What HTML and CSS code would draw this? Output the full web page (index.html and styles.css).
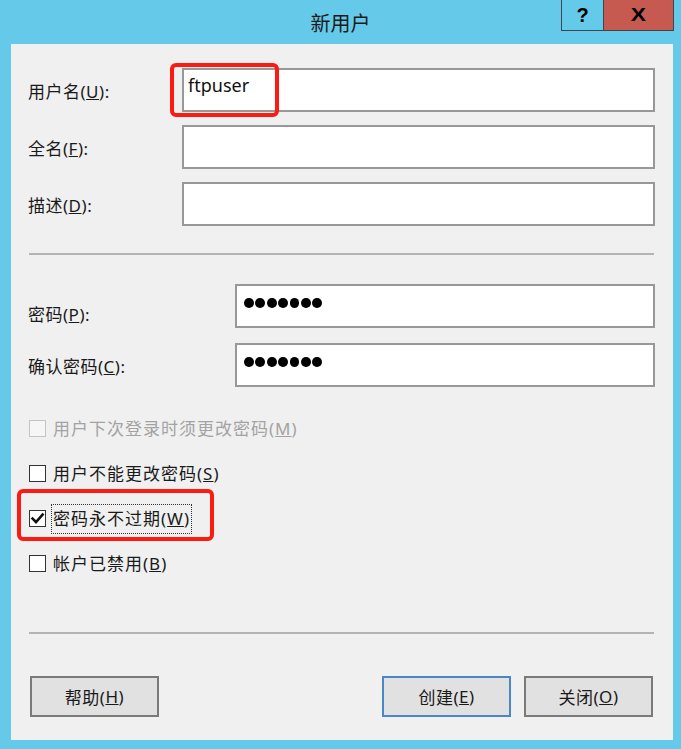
FILE: index.html
```html
<!DOCTYPE html>
<html lang="zh-CN">
<head>
<meta charset="utf-8">
<title>新用户</title>
<link rel="stylesheet" href="styles.css">
</head>
<body>
<div class="window">
  <div class="titlebar">
    <div class="spacer"></div>
    <div class="title">新用户</div>
    <div class="caption">
      <div class="cap-btn help-cap">?</div>
      <div class="cap-btn close-cap"><span class="x-glyph">X</span></div>
    </div>
  </div>
  <div class="client">
    <div class="row">
      <div class="label">用户名(<u>U</u>):</div>
      <div class="field"><span class="value">ftpuser</span></div>
    </div>
    <div class="row">
      <div class="label">全名(<u>F</u>):</div>
      <div class="field"></div>
    </div>
    <div class="row">
      <div class="label">描述(<u>D</u>):</div>
      <div class="field"></div>
    </div>
    <div class="sep sep-top"></div>
    <div class="row pw-row">
      <div class="label label-wide label-low">密码(<u>P</u>):</div>
      <div class="field">
        <div class="dots"><span class="dot"></span><span class="dot"></span><span class="dot"></span><span class="dot"></span><span class="dot"></span><span class="dot"></span><span class="dot"></span></div>
      </div>
    </div>
    <div class="row row-last">
      <div class="label label-wide">确认密码(<u>C</u>):</div>
      <div class="field">
        <div class="dots"><span class="dot"></span><span class="dot"></span><span class="dot"></span><span class="dot"></span><span class="dot"></span><span class="dot"></span><span class="dot"></span></div>
      </div>
    </div>
    <div class="checks">
      <div class="check disabled">
        <span class="box"></span>
        <span class="ctext">用户下次登录时须更改密码(<u>M</u>)</span>
      </div>
      <div class="check">
        <span class="box"></span>
        <span class="ctext">用户不能更改密码(<u>S</u>)</span>
      </div>
      <div class="check">
        <span class="box"><svg width="15" height="15" viewBox="0 0 15 15"><path d="M2.6 7.6 L6 11 L12.6 3.6" fill="none" stroke="#111" stroke-width="2.6" stroke-linecap="square"/></svg></span>
        <span class="ctext focus">密码永不过期(<u>W</u>)</span>
      </div>
      <div class="check">
        <span class="box"></span>
        <span class="ctext">帐户已禁用(<u>B</u>)</span>
      </div>
    </div>
    <div class="sep sep-bottom"></div>
    <div class="buttons">
      <div class="btn">帮助(<u>H</u>)</div>
      <div class="btn-group">
        <div class="btn default">创建(<u>E</u>)</div>
        <div class="btn">关闭(<u>O</u>)</div>
      </div>
    </div>
    <div class="mark mark-user"></div>
    <div class="mark mark-expire"></div>
  </div>
</div>
</body>
</html>
```
FILE: styles.css
```css
html, body {
  margin: 0;
  padding: 0;
}
body {
  background: #65c9e9;
  font-family: "Noto Sans", "Noto Sans CJK SC", sans-serif;
  color: #1a1a1a;
}
.window {
  width: 681px;
  height: 749px;
  background: #65c9e9;
  display: flex;
  flex-direction: column;
}
.titlebar {
  height: 44px;
  display: grid;
  grid-template-columns: 1fr auto 1fr;
  align-items: start;
}
.title {
  font-family: "Noto Sans CJK SC", sans-serif;
  font-size: 20px;
  line-height: 46px;
  color: #1a1a1a;
}
.caption {
  justify-self: end;
  margin-right: 7px;
  display: flex;
  border: 1px solid #3f4548;
  border-top: none;
}
.cap-btn {
  height: 30px;
  display: flex;
  align-items: center;
  justify-content: center;
  font-family: "Liberation Sans", sans-serif;
  font-weight: bold;
  color: #000;
}
.help-cap {
  width: 41px;
  font-size: 20px;
  border-right: 1px solid #3f4548;
  background: #65c9e9;
}
.close-cap {
  width: 69px;
  font-size: 19px;
  background: #c75a50;
}
.x-glyph {
  display: inline-block;
  transform: scaleX(1.2);
}
.client {
  position: relative;
  margin: 0 8px 0 11px;
  height: 696px;
  box-sizing: border-box;
  background: #f0f0f0;
  padding: 24px 18px 0 17px;
  display: flex;
  flex-direction: column;
  font-size: 17px;
}
.row {
  display: flex;
  align-items: center;
  height: 44px;
  margin-bottom: 13px;
}
.row-last {
  margin-bottom: 0;
}
.label {
  width: 154px;
  flex: none;
  white-space: nowrap;
  letter-spacing: 0.5px;
}
.label-wide {
  width: 207px;
}
.label-low {
  padding-top: 14px;
}
.pw-row {
  margin-top: 29px;
  margin-bottom: 15px;
}
.field {
  flex: 1;
  height: 44px;
  box-sizing: border-box;
  background: #fff;
  border: 2px solid #989898;
  padding: 3px 0 0 4px;
}
.value {
  font-family: "Noto Sans", sans-serif;
  font-size: 18px;
  line-height: 24px;
  color: #111;
}
.dots {
  display: flex;
  gap: 1.6px;
  padding: 9px 0 0 3px;
}
.dot {
  width: 9.8px;
  height: 10px;
  border-radius: 50%;
  background: #000;
}
.sep {
  height: 2px;
  background: #b4b4b4;
  margin-left: 1px;
  margin-right: 1px;
}
.sep-top {
  margin-top: 14px;
}
.checks {
  margin-top: 19px;
  padding-left: 1px;
  display: flex;
  flex-direction: column;
}
.check {
  height: 45px;
  display: flex;
  align-items: center;
}
.box {
  width: 17px;
  height: 17px;
  box-sizing: border-box;
  border: 1px solid #333;
  background: #fff;
  margin-right: 5px;
  display: flex;
  align-items: center;
  justify-content: center;
  flex: none;
}
.ctext {
  border: 1px dotted transparent;
  padding: 2px 1px;
  line-height: 24px;
  letter-spacing: 1px;
  white-space: nowrap;
}
.ctext.focus {
  border-color: #333;
}
.check.disabled .box {
  border-color: #c4c4c4;
  background: #f6f6f6;
}
.check.disabled .ctext {
  color: #a3a3a3;
}
.sep-bottom {
  margin-top: 46px;
}
.buttons {
  margin-top: 42px;
  display: flex;
  justify-content: space-between;
  padding: 0 2px;
}
.btn-group {
  display: flex;
  gap: 13px;
}
.btn {
  width: 129px;
  height: 41px;
  box-sizing: border-box;
  border: 2px solid #7a7a7a;
  background: #e1e1e1;
  display: flex;
  align-items: center;
  justify-content: center;
  letter-spacing: 0.5px;
}
.btn.default {
  border-color: #4a86c8;
}
.mark {
  position: absolute;
  border: 4px solid #fb1b12;
  border-radius: 6px;
  box-sizing: border-box;
}
.mark-user {
  left: 159px;
  top: 19px;
  width: 109px;
  height: 54px;
}
.mark-expire {
  left: 6px;
  top: 445px;
  width: 197px;
  height: 52px;
}
```
